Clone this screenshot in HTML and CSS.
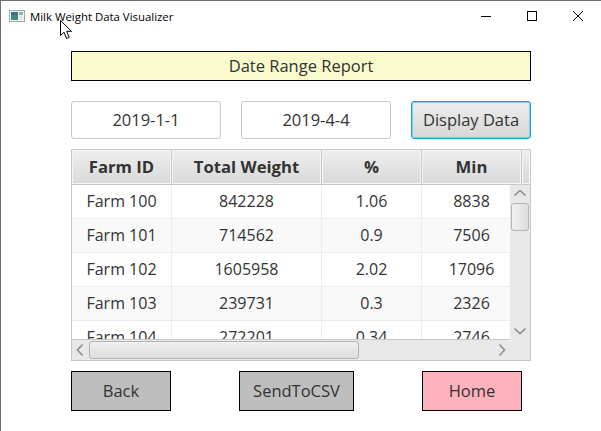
FILE: index.html
```html
<!DOCTYPE html>
<html lang="en">
<head>
    <meta charset="UTF-8">
    <meta name="viewport" content="width=device-width, initial-scale=1.0">
    <title>Milk Weight Data Visualizer</title>
    <link rel="stylesheet" href="styles.css">
</head>
<body>
    <div class="window">
        <div class="titlebar">
            <svg class="app-icon" width="16" height="14" viewBox="0 0 16 14">
                <rect x="0.5" y="1.5" width="15" height="11" fill="#f2f4f4" stroke="#a4a8aa"/>
                <rect x="2" y="3" width="7" height="8" fill="#3f8a86"/>
                <rect x="2" y="3" width="7" height="3" fill="#3d6f8f"/>
                <rect x="10" y="3" width="4" height="3" fill="#8fb5ad"/>
                <rect x="10" y="7" width="4" height="4" fill="#e3e8e6"/>
            </svg>
            <span class="title">Milk Weight Data Visualizer</span>
            <div class="win-controls">
                <svg width="12" height="12" viewBox="0 0 12 12"><path d="M1 6.5h10" stroke="#000" fill="none"/></svg>
                <svg width="12" height="12" viewBox="0 0 12 12"><rect x="1.5" y="1.5" width="9" height="9" stroke="#000" fill="none"/></svg>
                <svg width="12" height="12" viewBox="0 0 12 12"><path d="M1 1l10 10M11 1L1 11" stroke="#000" fill="none"/></svg>
            </div>
        </div>

        <div class="content">
            <div class="banner">Date Range Report</div>

            <div class="filters">
                <div class="field">2019-1-1</div>
                <div class="field">2019-4-4</div>
                <div class="display-btn">Display Data</div>
            </div>

            <div class="table-view">
                <div class="table-head">
                    <div class="th col-id">Farm ID</div>
                    <div class="th col-total">Total Weight</div>
                    <div class="th col-pct">%</div>
                    <div class="th col-min">Min</div>
                    <div class="th col-fill"></div>
                </div>
                <div class="table-middle">
                    <div class="table-body">
                        <div class="row">
                            <div class="td col-id">Farm 100</div>
                            <div class="td col-total">842228</div>
                            <div class="td col-pct">1.06</div>
                            <div class="td col-min">8838</div>
                        </div>
                        <div class="row alt">
                            <div class="td col-id">Farm 101</div>
                            <div class="td col-total">714562</div>
                            <div class="td col-pct">0.9</div>
                            <div class="td col-min">7506</div>
                        </div>
                        <div class="row">
                            <div class="td col-id">Farm 102</div>
                            <div class="td col-total">1605958</div>
                            <div class="td col-pct">2.02</div>
                            <div class="td col-min">17096</div>
                        </div>
                        <div class="row alt">
                            <div class="td col-id">Farm 103</div>
                            <div class="td col-total">239731</div>
                            <div class="td col-pct">0.3</div>
                            <div class="td col-min">2326</div>
                        </div>
                        <div class="row">
                            <div class="td col-id">Farm 104</div>
                            <div class="td col-total">272201</div>
                            <div class="td col-pct">0.34</div>
                            <div class="td col-min">2746</div>
                        </div>
                    </div>
                    <div class="vbar">
                        <svg class="arrow" width="20" height="16" viewBox="0 0 20 16"><path d="M4.5 10.5L10 5.5l5.500 5" stroke="#8a8a8a" stroke-width="1.500" fill="none"/></svg>
                        <div class="vthumb"></div>
                        <div class="vspace"></div>
                        <svg class="arrow" width="20" height="16" viewBox="0 0 20 16"><path d="M4.500 5.500L10 10.500l5.500-5" stroke="#8a8a8a" stroke-width="1.500" fill="none"/></svg>
                    </div>
                </div>
                <div class="table-bottom">
                    <div class="hbar">
                        <svg class="arrow" width="16" height="20" viewBox="0 0 16 20"><path d="M10.500 4.500L5.500 10l5 5.500" stroke="#8a8a8a" stroke-width="1.500" fill="none"/></svg>
                        <div class="hthumb"></div>
                        <div class="hspace"></div>
                        <svg class="arrow" width="16" height="20" viewBox="0 0 16 20"><path d="M5.500 4.500L10.500 10l-5 5.500" stroke="#8a8a8a" stroke-width="1.500" fill="none"/></svg>
                    </div>
                    <div class="corner"></div>
                </div>
            </div>

            <div class="actions">
                <div class="action gray back">Back</div>
                <div class="action gray send">SendToCSV</div>
                <div class="action pink">Home</div>
            </div>
        </div>

        <svg class="cursor" width="14" height="20" viewBox="0 0 14 20">
            <path d="M0.500 0.500V15.500L4 12.200 6.500 18.500 9.200 17.300 6.600 11.300H11.500Z" fill="#fff" stroke="#000"/>
        </svg>
    </div>
</body>
</html>
```

FILE: styles.css
```css
html, body {
    margin: 0;
    padding: 0;
    background-color: #fff;
}
body {
    font-family: "Open Sans", "Liberation Sans", sans-serif;
    color: #333;
}
.window {
    position: relative;
    width: 601px;
    height: 431px;
    box-sizing: border-box;
    border-top: 1px solid #6f6f6f;
    border-left: 1px solid #6f6f6f;
    overflow: hidden;
}
.titlebar {
    display: flex;
    align-items: center;
    height: 30px;
    padding-left: 8px;
}
.app-icon {
    margin-right: 5px;
}
.title {
    font-size: 11.4px;
    color: #000;
}
.win-controls {
    display: flex;
    gap: 34px;
    margin-left: auto;
    margin-right: 17px;
}
.content {
    display: flex;
    flex-direction: column;
    width: 460px;
    margin-left: 70px;
    padding-top: 20px;
}
.banner {
    box-sizing: border-box;
    height: 30px;
    line-height: 28px;
    border: 1px solid #000;
    background-color: #fafbcd;
    text-align: center;
    font-size: 16.5px;
}
.filters {
    display: flex;
    gap: 20px;
    margin-top: 20px;
}
.field, .display-btn {
    box-sizing: border-box;
    height: 38px;
    line-height: 36px;
    text-align: center;
    font-size: 16.5px;
    border-radius: 3px;
}
.field {
    width: 150px;
    border: 1px solid #c8c8c8;
    background-color: #fff;
}
.display-btn {
    width: 120px;
    border: 1px solid #12a5dc;
    box-shadow: inset 0 0 0 1px #7fcdea;
    background: linear-gradient(#eeeeee, #d6d6d6);
}
.table-view {
    box-sizing: border-box;
    height: 212px;
    margin-top: 10px;
    border: 1px solid #c8c8c8;
    display: flex;
    flex-direction: column;
}
.table-head {
    display: flex;
    height: 35px;
    flex-shrink: 0;
    border-bottom: 1px solid #c8c8c8;
    box-sizing: border-box;
}
.th {
    box-sizing: border-box;
    line-height: 33px;
    text-align: center;
    font-size: 16.7px;
    font-weight: 700;
    border-right: 1px solid #c8c8c8;
    background: linear-gradient(#eeeeee, #d9d9d9);
    box-shadow: inset 0 0 0 1px #f4f4f4;
}
.col-id { width: 100px; flex-shrink: 0; }
.col-total { width: 150px; flex-shrink: 0; }
.col-pct { width: 100px; flex-shrink: 0; }
.col-min { width: 100px; flex-shrink: 0; }
.col-fill {
    flex: 1;
    border-right: 0;
}
.table-middle {
    display: flex;
    height: 154px;
    flex-shrink: 0;
}
.table-body {
    width: 438px;
    overflow: hidden;
}
.row {
    display: flex;
    height: 34px;
    box-sizing: border-box;
    border-bottom: 1px solid #ededed;
    background-color: #fff;
}
.row.alt {
    background-color: #f9f9f9;
}
.td {
    box-sizing: border-box;
    line-height: 33px;
    text-align: center;
    font-size: 16px;
    border-right: 1px solid #ededed;
}
.vbar {
    width: 20px;
    display: flex;
    flex-direction: column;
    align-items: center;
    background-color: #e8e8e8;
}
.arrow {
    display: block;
    flex-shrink: 0;
}
.vthumb {
    box-sizing: border-box;
    width: 18px;
    height: 28px;
    margin-top: 2px;
    border: 1px solid #b4b4b4;
    border-radius: 3px;
    background: linear-gradient(to right, #f0f0f0, #dedede);
}
.vspace, .hspace {
    flex: 1;
}
.table-bottom {
    display: flex;
    flex: 1;
}
.hbar {
    width: 438px;
    display: flex;
    align-items: center;
    box-sizing: border-box;
    border-top: 1px solid #c8c8c8;
    background-color: #e8e8e8;
}
.hthumb {
    box-sizing: border-box;
    width: 270px;
    height: 18px;
    margin-left: 1px;
    border: 1px solid #b4b4b4;
    border-radius: 3px;
    background: linear-gradient(#f0f0f0, #dedede);
}
.corner {
    flex: 1;
    background-color: #e8e8e8;
}
.actions {
    display: flex;
    margin-top: 10px;
}
.action {
    box-sizing: border-box;
    height: 40px;
    line-height: 38px;
    text-align: center;
    font-size: 16.5px;
    border: 1px solid #000;
}
.gray {
    background-color: #bebebe;
}
.pink {
    background-color: #ffb1bc;
    width: 100px;
    margin-left: 68px;
}
.back {
    width: 100px;
}
.send {
    width: 115px;
    margin-left: 68px;
}
.cursor {
    position: absolute;
    left: 59px;
    top: 19px;
}
```
